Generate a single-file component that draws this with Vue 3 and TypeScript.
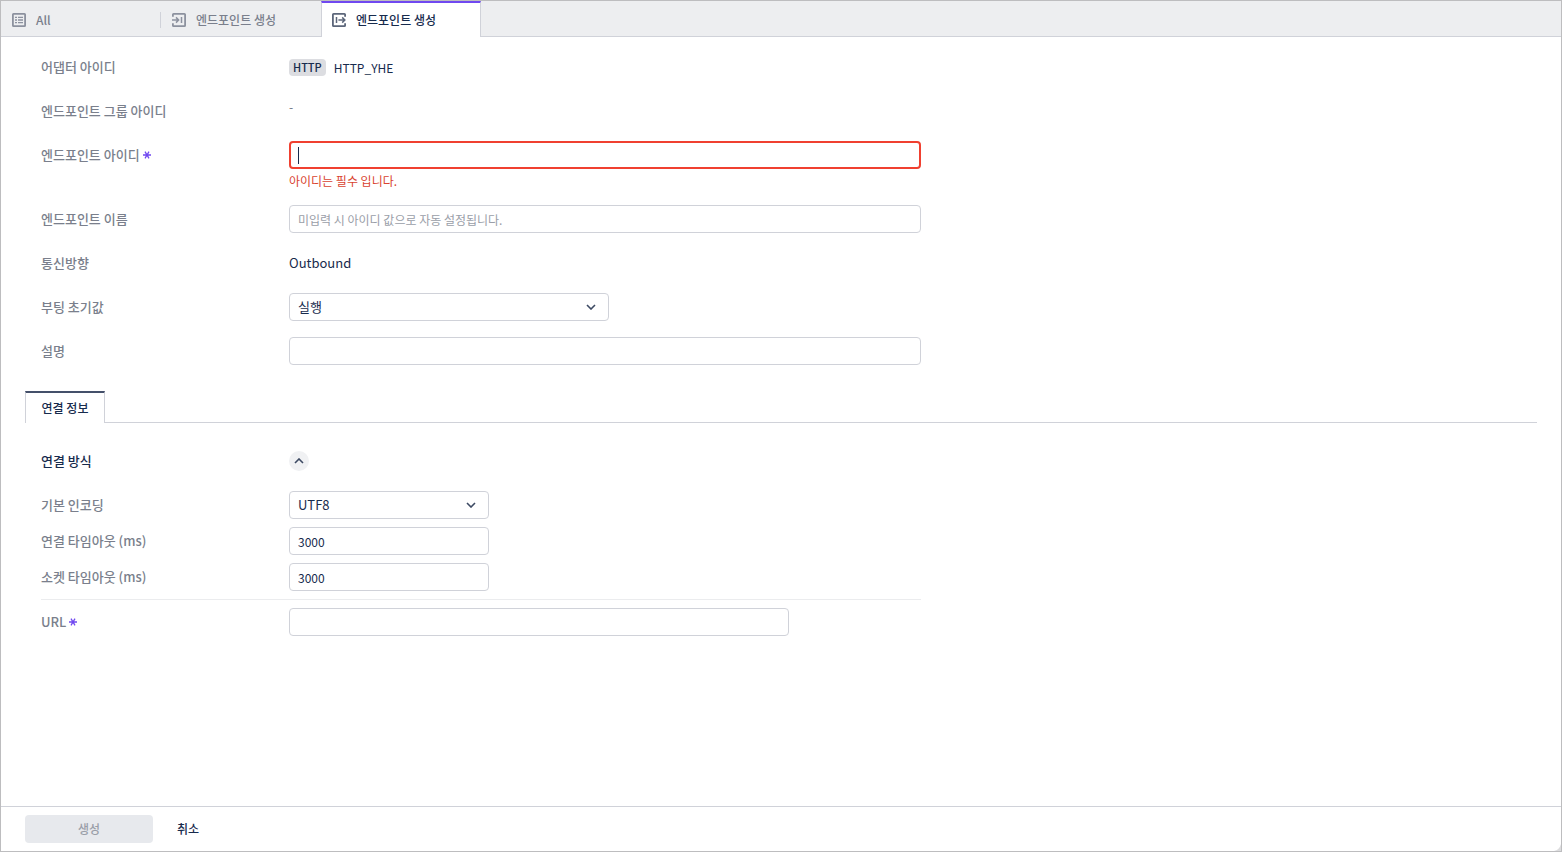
<script setup lang="ts">
import { onMounted, ref } from 'vue'

type TabIcon = 'list' | 'inbound' | 'outbound'

interface Tab {
  id: number
  label: string
  icon: TabIcon
}

const tabs: Tab[] = [
  { id: 1, label: 'All', icon: 'list' },
  { id: 2, label: '엔드포인트 생성', icon: 'inbound' },
  { id: 3, label: '엔드포인트 생성', icon: 'outbound' },
]

const activeTab = ref(3)
const expanded = ref(true)
const endpointId = ref('')
const endpointName = ref('')
const bootValue = ref('실행')
const description = ref('')
const encoding = ref('UTF8')
const connectTimeout = ref('3000')
const socketTimeout = ref('3000')
const url = ref('')

const idInput = ref<HTMLInputElement | null>(null)
onMounted(() => idInput.value?.focus())
</script>

<template>
  <div class="window">
    <nav class="tabs">
      <button
        v-for="tab in tabs"
        :key="tab.id"
        type="button"
        class="tab"
        :class="{ active: tab.id === activeTab }"
        @click="activeTab = tab.id"
      >
        <svg class="tab-icon" viewBox="0 0 16 16" fill="none" stroke="currentColor" stroke-width="1.8" aria-hidden="true">
          <template v-if="tab.icon === 'list'">
            <rect x="1.9" y="1.9" width="12.2" height="12.2" rx="0.6" />
            <path d="M4 5.4h2M4 8h2M4 10.6h2M7 5.4h5M7 8h5M7 10.6h5" stroke-width="1.3" />
          </template>
          <template v-else-if="tab.icon === 'inbound'">
            <path d="M1.9 4.8V2.6q0-.7.7-.7h10.8q.7 0 .7.7v10.8q0 .7-.7.7H2.6q-.7 0-.7-.7v-2.2" />
            <path d="M1 8h6.2M5 5.4 7.6 8 5 10.6M10.5 5v6" stroke-width="1.5" />
          </template>
          <template v-else>
            <path d="M14.1 4.8V2.6q0-.7-.7-.7H2.6q-.7 0-.7.7v10.8q0 .7.7.7h10.8q.7 0 .7-.7v-2.2" />
            <path d="M7.4 8h6.2M11.2 5.4 13.8 8l-2.6 2.6M5.5 5v6" stroke-width="1.5" />
          </template>
        </svg>
        <span>{{ tab.label }}</span>
      </button>
    </nav>

    <main class="content">
      <form id="endpoint-form" @submit.prevent>
        <section class="fields">
          <div class="row">
            <span class="label">어댑터 아이디</span>
            <div class="value adapter">
              <span class="badge">HTTP</span>
              <span class="small">HTTP_YHE</span>
            </div>
          </div>
          <div class="row">
            <span class="label">엔드포인트 그룹 아이디</span>
            <span class="empty">-</span>
          </div>
          <div class="row">
            <label class="label" for="endpoint-id">
              엔드포인트 아이디
              <svg class="required" viewBox="0 0 8 8" aria-hidden="true"><path d="M0 4h8M2 .7l4 6.6M6 .7 2 7.3" /></svg>
            </label>
            <div class="stack">
              <div class="caret-box">
                <input id="endpoint-id" ref="idInput" v-model="endpointId" class="control invalid" type="text" autocomplete="off" required />
                <span v-if="!endpointId" class="caret"></span>
              </div>
              <p class="error">아이디는 필수 입니다.</p>
            </div>
          </div>
          <div class="row">
            <label class="label" for="endpoint-name">엔드포인트 이름</label>
            <input id="endpoint-name" v-model="endpointName" class="control" type="text" placeholder="미입력 시 아이디 값으로 자동 설정됩니다." />
          </div>
          <div class="row">
            <span class="label">통신방향</span>
            <span class="value">Outbound</span>
          </div>
          <div class="row">
            <label class="label" for="boot-value">부팅 초기값</label>
            <div class="select medium">
              <select id="boot-value" v-model="bootValue" class="control">
                <option>실행</option>
                <option>중지</option>
              </select>
              <svg class="chevron" viewBox="0 0 10 6" aria-hidden="true"><path d="M1 1l4 4 4-4" /></svg>
            </div>
          </div>
          <div class="row">
            <label class="label" for="description">설명</label>
            <input id="description" v-model="description" class="control" type="text" />
          </div>
        </section>

        <div class="subtabs">
          <button type="button" class="subtab">연결 정보</button>
        </div>

        <section class="fields connection">
          <div class="row">
            <h2 class="label heading">연결 방식</h2>
            <div class="value">
              <button type="button" class="toggle" aria-label="연결 방식" :aria-expanded="expanded" @click="expanded = !expanded">
                <svg class="toggle-icon" :class="{ closed: !expanded }" viewBox="0 0 10 6" aria-hidden="true"><path d="M1 5l4-4 4 4" /></svg>
              </button>
            </div>
          </div>
          <template v-if="expanded">
            <div class="group">
              <div class="row">
                <label class="label" for="encoding">기본 인코딩</label>
                <div class="select narrow">
                  <select id="encoding" v-model="encoding" class="control">
                    <option>UTF8</option>
                    <option>EUC-KR</option>
                  </select>
                  <svg class="chevron" viewBox="0 0 10 6" aria-hidden="true"><path d="M1 1l4 4 4-4" /></svg>
                </div>
              </div>
              <div class="row">
                <label class="label" for="connect-timeout">연결 타임아웃 (ms)</label>
                <input id="connect-timeout" v-model="connectTimeout" class="control narrow" type="text" inputmode="numeric" />
              </div>
              <div class="row">
                <label class="label" for="socket-timeout">소켓 타임아웃 (ms)</label>
                <input id="socket-timeout" v-model="socketTimeout" class="control narrow" type="text" inputmode="numeric" />
              </div>
              <div class="row divided">
                <label class="label" for="url">
                  URL
                  <svg class="required" viewBox="0 0 8 8" aria-hidden="true"><path d="M0 4h8M2 .7l4 6.6M6 .7 2 7.3" /></svg>
                </label>
                <input id="url" v-model="url" class="control wide" type="text" required />
              </div>
            </div>
          </template>
        </section>
      </form>
    </main>

    <footer class="footer">
      <button type="submit" form="endpoint-form" class="submit" disabled>생성</button>
      <button type="button" class="cancel">취소</button>
    </footer>
    <svg class="grip" viewBox="0 0 8 8" aria-hidden="true"><path d="M8 0v8H0Q6 7 8 0Z" /></svg>
  </div>
</template>

<style>
body {
  margin: 0;
}
</style>

<style scoped>
.window {
  position: relative;
  box-sizing: border-box;
  display: flex;
  flex-direction: column;
  min-height: 100vh;
  border: 1px solid #bdbdbf;
  background: #fff;
  color: #172b4d;
  font-family: "Noto Sans CJK KR", "Noto Sans", sans-serif;
  font-size: 13px;
  line-height: 20px;
}

button,
input,
select {
  font-family: inherit;
}

.tabs {
  display: flex;
  height: 36px;
  background: linear-gradient(#d0d2d9, #d0d2d9) bottom / 100% 1px no-repeat #edeef0;
}

.tab {
  position: relative;
  box-sizing: border-box;
  display: flex;
  align-items: center;
  gap: 9px;
  width: 160px;
  padding: 2px 10px 0;
  border: 0;
  background: none;
  color: #7a7f8c;
  font-size: 12px;
  font-weight: 500;
  line-height: 20px;
  text-align: left;
}

.tab:first-child::after {
  content: "";
  position: absolute;
  right: 0;
  top: 11px;
  width: 1px;
  height: 16px;
  background: #d0d2d9;
}

.tab.active {
  padding: 0 9px;
  border: 1px solid #d0d2d9;
  border-top: 2px solid #7048f0;
  border-bottom: 0;
  background: #fff;
  color: #172b4d;
}

.tab-icon {
  flex: none;
  width: 16px;
  height: 16px;
  color: #8c919e;
}

.tab.active .tab-icon {
  color: #5c667a;
}

.content {
  flex: 1;
  padding: 16px 24px;
}

.fields {
  display: flex;
  flex-direction: column;
  gap: 16px;
  max-width: 880px;
  padding: 0 16px;
}

.row {
  display: grid;
  grid-template-columns: 248px minmax(0, 1fr);
}

.label {
  display: flex;
  align-items: center;
  gap: 3px;
  height: 28px;
  margin: 0;
  color: #7a7f8c;
  font-size: 13px;
  font-weight: 500;
}

.heading {
  color: #172b4d;
}

.required {
  width: 8px;
  height: 8px;
  fill: none;
  stroke: #7048f0;
  stroke-width: 1.3;
}

.value {
  display: flex;
  align-items: center;
  height: 28px;
}

.adapter {
  gap: 8px;
}

.badge {
  padding: 0 4px;
  border-radius: 4px;
  background: #dcdde1;
  font-size: 11px;
  font-weight: 500;
  line-height: 17px;
}

.small {
  padding-top: 2px;
  font-size: 12px;
}

.empty {
  color: #6b7280;
  font-size: 12px;
}

.control {
  box-sizing: border-box;
  width: 100%;
  height: 28px;
  margin: 0;
  padding: 0 8px;
  border: 1px solid #d0d2d9;
  border-radius: 4px;
  outline: 0;
  background: #fff;
  color: #172b4d;
  font-size: 12px;
}

.control::placeholder {
  color: #9a9ea8;
  opacity: 1;
}

.invalid {
  display: block;
  border: 2px solid #f04030;
  caret-color: transparent;
}

.caret-box {
  position: relative;
}

.caret {
  position: absolute;
  left: 9px;
  top: 6px;
  width: 1px;
  height: 17px;
  background: #172b4d;
  pointer-events: none;
}

.error {
  margin: 0;
  padding-top: 4px;
  color: #d9432f;
  font-size: 12px;
  line-height: 16px;
}

.select {
  position: relative;
}

.select .control {
  display: block;
  padding: 0 32px 2px 8px;
  appearance: none;
  font-size: 13px;
}

.chevron {
  position: absolute;
  right: 13px;
  top: 11px;
  width: 10px;
  height: 6px;
  pointer-events: none;
}

.chevron,
.toggle-icon {
  fill: none;
  stroke: #3d4a63;
  stroke-width: 1.6;
}

.toggle-icon {
  width: 10px;
  height: 6px;
}

.closed {
  transform: rotate(180deg);
}

.medium {
  max-width: 320px;
}

.narrow {
  max-width: 200px;
}

.wide {
  max-width: 500px;
}

.subtabs {
  display: flex;
  margin: 26px 0 24px;
  background: linear-gradient(#d0d2d9, #d0d2d9) bottom / 100% 1px no-repeat;
}

.subtab {
  min-width: 80px;
  height: 32px;
  padding: 0 15px 2px;
  border: 1px solid #d0d2d9;
  border-top: 2px solid #44506a;
  border-bottom: 0;
  background: #fff;
  color: #172b4d;
  font-size: 12px;
  font-weight: 500;
}

.toggle {
  display: flex;
  align-items: center;
  justify-content: center;
  width: 20px;
  height: 20px;
  padding: 0;
  border: 0;
  border-radius: 50%;
  background: #f0f1f3;
}

.group {
  display: flex;
  flex-direction: column;
  gap: 8px;
}

.divided {
  padding-top: 8px;
  border-top: 1px solid #ebecee;
}

.footer {
  display: flex;
  gap: 8px;
  padding: 8px 24px;
  border-top: 1px solid #d0d2d9;
}

.submit,
.cancel {
  height: 28px;
  padding: 0 16px 2px;
  border: 0;
  border-radius: 4px;
  background: none;
  color: #172b4d;
  font-size: 12px;
  font-weight: 500;
}

.submit {
  width: 128px;
  background: #e7e9ed;
  color: #9a9ea8;
}

.grip {
  position: absolute;
  right: 0;
  bottom: 0;
  width: 7px;
  height: 7px;
  fill: #dcdcde;
}
</style>
